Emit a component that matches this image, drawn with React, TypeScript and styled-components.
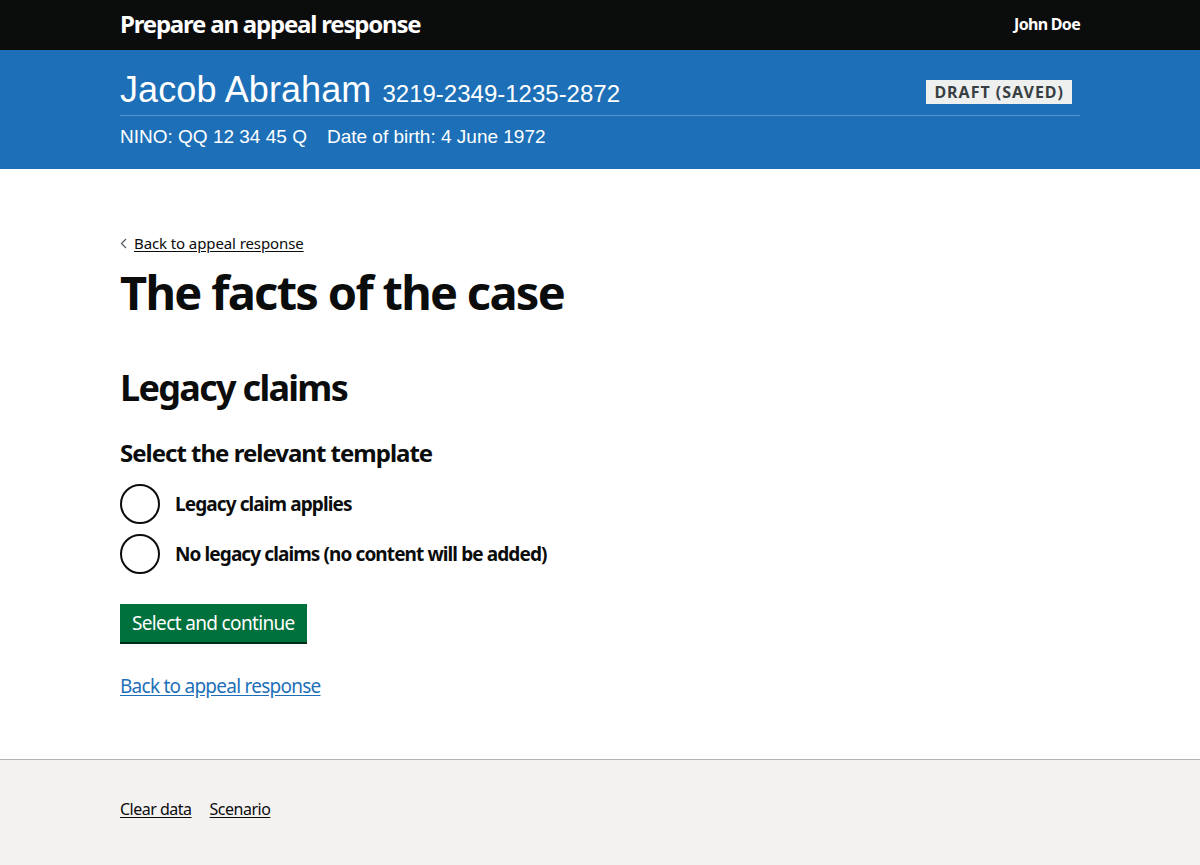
import React from 'react';
import styled, { createGlobalStyle } from 'styled-components';

const font = `"Noto Sans", Arial, sans-serif`;

const GlobalStyle = createGlobalStyle`
  html, body {
    margin: 0;
    padding: 0;
    background: #fff;
  }
  body {
    font-family: ${font};
    color: #0b0c0c;
    -webkit-font-smoothing: antialiased;
  }
`;

const Page = styled.div`
  min-height: 865px;
  display: flex;
  flex-direction: column;
`;

const Width = styled.div`
  width: 960px;
  margin: 0 auto;
`;

// Header
const TopBar = styled.header`
  background: #0b0c0c;
  height: 50px;
`;

const TopBarInner = styled(Width)`
  height: 100%;
  box-sizing: border-box;
  padding-bottom: 3px;
  display: flex;
  align-items: center;
  justify-content: space-between;
`;

const ServiceName = styled.div`
  color: #fff;
  font-size: 24px;
  font-weight: 700;
  letter-spacing: -1.2px;
`;

const UserName = styled.div`
  color: #fff;
  font-size: 16px;
  font-weight: 700;
  letter-spacing: -0.7px;
`;

// Banner
const Banner = styled.div`
  background: #1d70b8;
  color: #fff;
  font-family: "Liberation Sans", Arial, sans-serif;
  height: 119px;
`;

const BannerTop = styled.div`
  display: flex;
  align-items: center;
  justify-content: space-between;
  padding-top: 20px;
  padding-bottom: 5px;
  border-bottom: 1px solid #5694ca;
`;

const Person = styled.div`
  display: flex;
  align-items: baseline;
  gap: 11px;
`;

const PersonName = styled.span`
  font-size: 36px;
  line-height: 40px;
  letter-spacing: 0.1px;
`;

const ClaimRef = styled.span`
  font-size: 24px;
`;

const Tag = styled.span`
  background: #eeefef;
  color: #383f43;
  font-family: ${font};
  font-size: 16px;
  font-weight: 700;
  letter-spacing: 1px;
  padding: 2px 8px;
  margin: 4px 8px 0 0;
  line-height: 20px;
`;

const BannerMeta = styled.div`
  display: flex;
  gap: 20px;
  font-size: 19px;
  padding-top: 10px;
`;

// Main
const Main = styled(Width)`
  padding-top: 64px;
  padding-bottom: 60px;
  flex: 1;
`;

const BackLink = styled.a`
  display: flex;
  width: fit-content;
  align-items: center;
  gap: 7px;
  font-size: 15px;
  line-height: 20px;
  color: #0b0c0c;
  text-decoration: underline;
  text-underline-offset: 2px;
  letter-spacing: -0.1px;
`;

const Title = styled.h1`
  font-size: 47px;
  font-weight: 700;
  line-height: 50px;
  margin: 14px 0 0;
  letter-spacing: -1.7px;
`;

const SectionTitle = styled.h2`
  font-size: 36px;
  font-weight: 700;
  line-height: 40px;
  margin: 51px 0 0;
  letter-spacing: -1.7px;
`;

const Legend = styled.h3`
  font-size: 24px;
  font-weight: 700;
  line-height: 30px;
  margin: 30px 0 0;
  letter-spacing: -1px;
`;

const Radios = styled.div`
  display: flex;
  flex-direction: column;
  gap: 10px;
  margin-top: 16px;
`;

const RadioItem = styled.label`
  display: flex;
  align-items: center;
  gap: 15px;
  font-size: 19px;
  font-weight: 700;
  letter-spacing: -0.9px;
`;

const RadioCircle = styled.span`
  width: 40px;
  height: 40px;
  box-sizing: border-box;
  border: 2px solid #0b0c0c;
  border-radius: 50%;
  flex: 0 0 40px;
`;

const Button = styled.button`
  display: block;
  margin-top: 30px;
  background: #00703c;
  color: #fff;
  border: 0;
  box-shadow: 0 2px 0 #002d18;
  font-family: ${font};
  font-size: 19px;
  line-height: 22px;
  padding: 8px 12px 8px;
  letter-spacing: -0.65px;
  cursor: pointer;
`;

const TextLink = styled.a`
  display: block;
  width: fit-content;
  margin-top: 31px;
  font-size: 19px;
  color: #1d70b8;
  text-decoration: underline;
  text-underline-offset: 2px;
  letter-spacing: -0.75px;
`;

// Footer
const Footer = styled.footer`
  background: #f3f2f1;
  border-top: 1px solid #b1b4b6;
  height: 105px;
`;

const FooterInner = styled(Width)`
  display: flex;
  gap: 18px;
  padding-top: 38px;
`;

const FooterLink = styled.a`
  font-size: 16px;
  color: #0b0c0c;
  text-decoration: underline;
  text-underline-offset: 2px;
  letter-spacing: -0.5px;
`;

const Chevron = () => (
  <svg width="7" height="11" viewBox="0 0 7 11" fill="none">
    <path d="M6 1L1.5 5.5L6 10" stroke="#505a5f" strokeWidth="1.2" />
  </svg>
);

export default function App() {
  return (
    <Page>
      <GlobalStyle />
      <TopBar>
        <TopBarInner>
          <ServiceName>Prepare an appeal response</ServiceName>
          <UserName>John Doe</UserName>
        </TopBarInner>
      </TopBar>

      <Banner>
        <Width>
          <BannerTop>
            <Person>
              <PersonName>Jacob Abraham</PersonName>
              <ClaimRef>3219-2349-1235-2872</ClaimRef>
            </Person>
            <Tag>DRAFT (SAVED)</Tag>
          </BannerTop>
          <BannerMeta>
            <span>NINO: QQ 12 34 45 Q</span>
            <span>Date of birth: 4 June 1972</span>
          </BannerMeta>
        </Width>
      </Banner>

      <Main>
        <BackLink href="#">
          <Chevron />
          Back to appeal response
        </BackLink>
        <Title>The facts of the case</Title>
        <SectionTitle>Legacy claims</SectionTitle>
        <Legend>Select the relevant template</Legend>
        <Radios>
          <RadioItem>
            <RadioCircle />
            Legacy claim applies
          </RadioItem>
          <RadioItem>
            <RadioCircle />
            No legacy claims (no content will be added)
          </RadioItem>
        </Radios>
        <Button>Select and continue</Button>
        <TextLink href="#">Back to appeal response</TextLink>
      </Main>

      <Footer>
        <FooterInner>
          <FooterLink href="#">Clear data</FooterLink>
          <FooterLink href="#">Scenario</FooterLink>
        </FooterInner>
      </Footer>
    </Page>
  );
}
